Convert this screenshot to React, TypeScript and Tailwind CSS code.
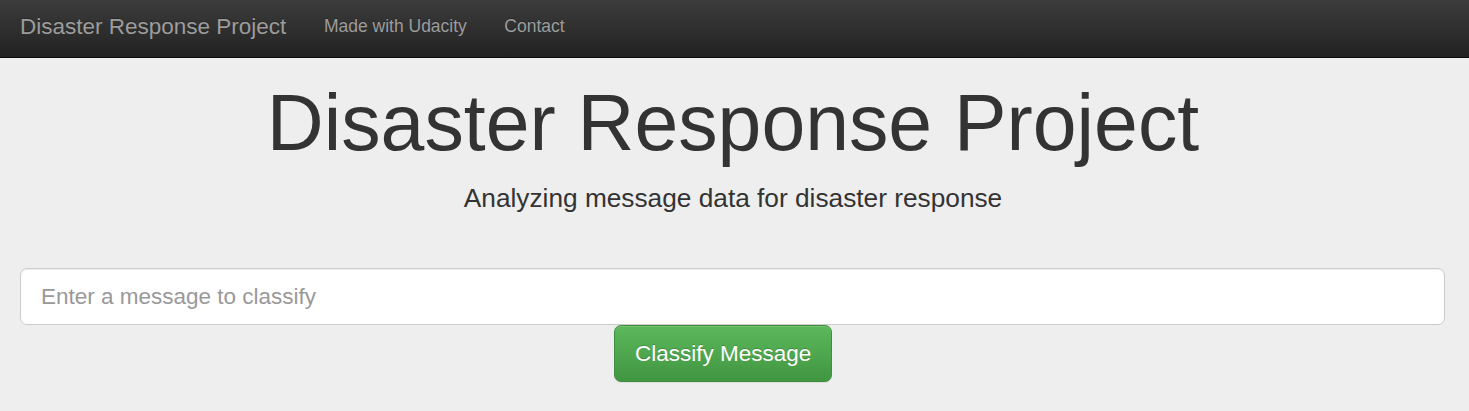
export default function App() {
  return (
    <div
      className="min-h-[411px] bg-[#eeeeee] text-[#333333]"
      style={{ fontFamily: '"Liberation Sans", Arial, sans-serif' }}
    >
      <nav className="h-[58px] bg-[linear-gradient(to_bottom,#3c3c3c_0%,#222222_100%)] border-b border-[#080808] flex items-start pt-[14px]">
        <a className="pl-[20px] pr-[18.75px] text-[22.5px] leading-[25px] text-[#9d9d9d] [text-shadow:0_-1px_0_rgba(0,0,0,0.25)] whitespace-nowrap">
          Disaster Response Project
        </a>
        <a className="px-[18.75px] text-[17.5px] leading-[25px] text-[#9d9d9d] [text-shadow:0_-1px_0_rgba(0,0,0,0.25)] whitespace-nowrap">
          Made with Udacity
        </a>
        <a className="px-[18.75px] text-[17.5px] leading-[25px] text-[#9d9d9d] [text-shadow:0_-1px_0_rgba(0,0,0,0.25)] whitespace-nowrap">
          Contact
        </a>
      </nav>
      <div className="flex flex-col items-center pt-[22px] pr-[3px]">
        <h1 className="text-[78.75px] leading-[1.1] font-normal text-[#333333] m-0 whitespace-nowrap">
          Disaster Response Project
        </h1>
        <p className="mt-[13px] text-[26.25px] leading-[37.5px] text-[#333333] whitespace-nowrap">
          Analyzing message data for disaster response
        </p>
      </div>
      <div className="pl-[20px] pr-[24px] mt-[51px]">
        <input
          type="text"
          placeholder="Enter a message to classify"
          className="block w-full h-[57px] rounded-[7px] border border-[#cccccc] bg-white px-[20px] text-[22.5px] text-[#555555] placeholder:text-[#999999] shadow-[inset_0_1px_1px_rgba(0,0,0,0.075)] outline-none"
        />
        <div className="flex">
          <button className="ml-[594px] h-[57px] px-[20px] rounded-[7px] border border-[#3e8f3e] bg-[linear-gradient(to_bottom,#5cb85c_0%,#419641_100%)] text-white text-[22.5px] [text-shadow:0_-1px_0_rgba(0,0,0,0.2)] shadow-[inset_0_1px_0_rgba(255,255,255,0.15),0_1px_1px_rgba(0,0,0,0.075)] whitespace-nowrap">
            Classify Message
          </button>
        </div>
      </div>
    </div>
  );
}
